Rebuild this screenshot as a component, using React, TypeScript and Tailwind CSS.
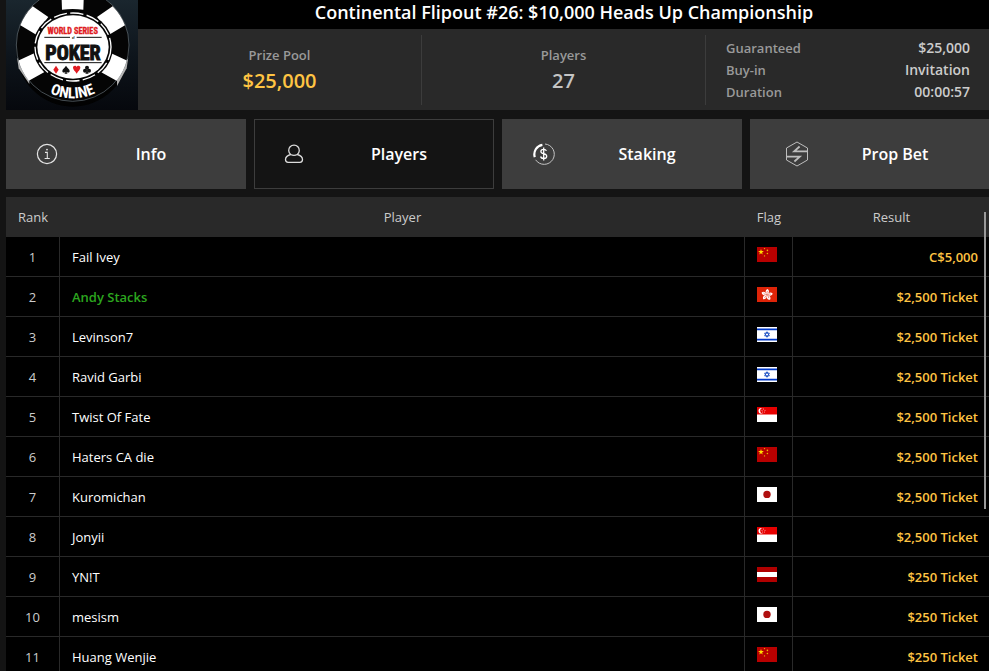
import {useState} from 'react';
import type {ReactNode} from 'react';

type FlagCode = 'cn' | 'hk' | 'il' | 'sg' | 'jp' | 'lv';

interface IPlayer {
  rank: number;
  name: string;
  flag: FlagCode;
  result: string;
  highlighted?: boolean;
}

const players: IPlayer[] = [
  {rank: 1, name: 'Fail Ivey', flag: 'cn', result: 'C$5,000'},
  {rank: 2, name: 'Andy Stacks', flag: 'hk', result: '$2,500 Ticket', highlighted: true},
  {rank: 3, name: 'Levinson7', flag: 'il', result: '$2,500 Ticket'},
  {rank: 4, name: 'Ravid Garbi', flag: 'il', result: '$2,500 Ticket'},
  {rank: 5, name: 'Twist Of Fate', flag: 'sg', result: '$2,500 Ticket'},
  {rank: 6, name: 'Haters CA die', flag: 'cn', result: '$2,500 Ticket'},
  {rank: 7, name: 'Kuromichan', flag: 'jp', result: '$2,500 Ticket'},
  {rank: 8, name: 'Jonyii', flag: 'sg', result: '$2,500 Ticket'},
  {rank: 9, name: 'YN!T', flag: 'lv', result: '$250 Ticket'},
  {rank: 10, name: 'mesism', flag: 'jp', result: '$250 Ticket'},
  {rank: 11, name: 'Huang Wenjie', flag: 'cn', result: '$250 Ticket'},
];

const details = [
  {label: 'Guaranteed', value: '$25,000'},
  {label: 'Buy-in', value: 'Invitation'},
  {label: 'Duration', value: '00:00:57'},
];

const STAR = 'M0-3 .7-.95 2.9-.9 1.1.4 1.75 2.4 0 1.2-1.75 2.4-1.1.4-2.9-.9-.7-.95Z';

const flagArt: Record<FlagCode, ReactNode> = {
  cn: (
    <>
      <rect width="20" height="15" fill="#b80000" />
      <path d={STAR} transform="translate(4 5)" fill="#ffde00" />
      <g fill="#e8b800">
        <circle cx="7.5" cy="1.6" r=".7" />
        <circle cx="10.4" cy="3.4" r=".8" />
        <circle cx="10.4" cy="6.5" r=".8" />
        <circle cx="7.5" cy="8.9" r=".7" />
      </g>
    </>
  ),
  hk: (
    <>
      <rect width="20" height="15" fill="#de2408" />
      {[0, 72, 144, 216, 288].map((deg) => (
        <g key={deg} transform={`translate(10 7.8) rotate(${deg + 8})`}>
          <path d="M0-.4C-2.4-1.8-2.4-4.6-.3-5.8 1.7-5 2.3-2.6 0-.4Z" fill="#fff" />
          <path d="M0-1.2Q-.8-2.6 0-3.8" fill="none" stroke="#de2408" strokeWidth=".5" />
        </g>
      ))}
    </>
  ),
  il: (
    <>
      <rect width="20" height="15" fill="#fff" />
      <path d="M0 2.4h20M0 12.6h20" stroke="#0038c8" strokeWidth="1.8" />
      <path
        d="M10 4.7 12.4 8.9H7.6ZM10 10.3 7.6 6.1H12.4Z"
        fill="none"
        stroke="#1b4fc4"
        strokeWidth=".9"
      />
    </>
  ),
  sg: (
    <>
      <rect width="20" height="15" fill="#fff" />
      <rect width="20" height="7.5" fill="#e60000" />
      <circle cx="4.4" cy="3.8" r="2.9" fill="#fff" />
      <circle cx="6" cy="3.8" r="2.8" fill="#e60000" />
      <g fill="#ffc4c4">
        <circle cx="6.5" cy="2" r=".5" />
        <circle cx="5" cy="3.3" r=".5" />
        <circle cx="8" cy="3.3" r=".5" />
        <circle cx="5.6" cy="5" r=".5" />
        <circle cx="7.4" cy="5" r=".5" />
      </g>
    </>
  ),
  jp: (
    <>
      <rect width="20" height="15" fill="#fff" />
      <circle cx="10" cy="7.4" r="3.7" fill="#b01010" />
    </>
  ),
  lv: (
    <>
      <rect width="20" height="15" fill="#b00000" />
      <rect y="5" width="20" height="5" fill="#fff" />
    </>
  ),
};

const flagNames: Record<FlagCode, string> = {
  cn: 'China',
  hk: 'Hong Kong',
  il: 'Israel',
  sg: 'Singapore',
  jp: 'Japan',
  lv: 'Latvia',
};

const Flag = ({code}: {code: FlagCode}) => (
  <svg
    viewBox="0 0 20 15"
    className="mb-1 block h-[15px] w-5"
    role="img"
    aria-label={flagNames[code]}
  >
    {flagArt[code]}
  </svg>
);

const tabs = [
  {
    id: 'info',
    label: 'Info',
    icon: (
      <svg viewBox="0 0 22 22" className="h-[22px] w-[22px]" fill="none" stroke="#e4e4e4">
        <circle cx="11" cy="11" r="9.6" strokeWidth="1.2" />
        <path d="M9 9.4h2.3v6M8.6 15.5h5.2" strokeWidth="1.1" />
        <circle cx="11" cy="6.6" r=".9" fill="#e4e4e4" stroke="none" />
      </svg>
    ),
  },
  {
    id: 'players',
    label: 'Players',
    icon: (
      <svg viewBox="1 0 22 22" className="h-[22px] w-[22px]" fill="none" stroke="#dcdcdc" strokeWidth="1.3">
        <path d="M7.7 11.5A5.3 5.3 0 1 1 14.3 11.5C17 12.2 19.5 14 19.5 16.6 19.5 18.4 18.6 19.4 17 19.4H5C3.4 19.4 2.5 18.4 2.5 16.6 2.5 14 5 12.2 7.7 11.5Q11 13.2 14.3 11.5" />
      </svg>
    ),
  },
  {
    id: 'staking',
    label: 'Staking',
    icon: (
      <svg viewBox="0 0 22 22" className="ml-[2px] h-[22px] w-[22px]" fill="none" stroke="#fff">
        <path d="M1.8 14.2A9.6 9.6 0 0 1 9.4 1.8" strokeWidth="2.2" />
        <path d="M12 1A10.2 10.2 0 1 1 2.6 16.8" stroke="#c4c4c4" strokeWidth="1" />
        <path
          d="M13.4 7.9C13 6.8 12 6.3 10.6 6.3 9 6.3 7.9 7.1 7.9 8.4 7.9 11.4 13.7 10 13.7 13.2 13.7 14.7 12.4 15.5 10.8 15.5 9 15.5 7.9 14.8 7.6 13.5M10.7 4.4V17.4"
          strokeWidth="1.3"
        />
      </svg>
    ),
  },
  {
    id: 'prop-bet',
    label: 'Prop Bet',
    icon: (
      <svg viewBox="0 0 24 26" className="ml-3 h-[26px] w-6" fill="none" stroke="#bdbdbd">
        <path d="M12 1 22.5 7V19L12 25 1.5 19V7Z" strokeWidth="1" />
        <path d="M14.6 5.5 9.2 10.4H22.5M9.4 20.5 14.8 15.6H1.5" strokeWidth="1.8" />
      </svg>
    ),
  },
];

const TournamentLogo = () => (
  <svg
    viewBox="0 0 396 330"
    className="h-[110px] w-[132px] shrink-0"
    role="img"
    aria-label="World Series of Poker Online"
  >
    <defs>
      <linearGradient id="backdrop" x1="0" y1="0" x2="0" y2="1">
        <stop offset="0" stopColor="#1a262e" />
        <stop offset=".5" stopColor="#0e151c" />
        <stop offset="1" stopColor="#06080d" />
      </linearGradient>
      <path id="online-arc" d="M43 138A157 157 0 0 0 357 138" />
    </defs>
    <rect width="396" height="330" fill="url(#backdrop)" />
    <ellipse cx="200" cy="150" rx="169" ry="170" fill="#020202" />
    <path d="M33 172 38 205 70 252V236Z" fill="#b5b5b5" />
    <path d="M367 172 362 205 333 258V236Z" fill="#b5b5b5" />
    <circle cx="200" cy="135" r="169" fill="#050505" stroke="#66737a" strokeWidth="2" />
    {[0, 57, -57, 117, -117].map((deg) => (
      <path
        key={deg}
        d="M-34-165Q0-172 34-165L32-108Q0-112-32-108Z"
        transform={`translate(200 137) rotate(${deg})`}
        fill="#fff"
      />
    ))}
    <ellipse cx="201" cy="141" rx="120" ry="109" fill="#050505" />
    <ellipse
      cx="201"
      cy="141"
      rx="114"
      ry="102"
      fill="none"
      stroke="#fff"
      strokeWidth="4"
      strokeDasharray="40 10"
    />
    <ellipse cx="201" cy="141" rx="107" ry="95" fill="#fff" />
    <g fontFamily="'Roboto Condensed', 'Liberation Sans Narrow', 'Open Sans Condensed', 'Liberation Sans', sans-serif" fontWeight="700" textAnchor="middle">
      <text x="200" y="101" fontSize="25" fill="#e01b22" stroke="#e01b22" strokeWidth="1">
        WORLD SERIES
      </text>
      <text x="202" y="117" fontSize="9" fill="#111">
        of
      </text>
      <text x="201" y="180" fontSize="60" fill="#111" stroke="#111" strokeWidth="3">
        POKER
      </text>
      <text fontSize="46" fill="#fff">
        <textPath href="#online-arc" startOffset="50%">
          ONLINE
        </textPath>
      </text>
    </g>
    <path d="M115 112H192M212 112H287M115 188H287" stroke="#111" strokeWidth="3" />
    <path d="M150 197 158 209 150 221 142 209Z" fill="#e01b22" />
    <path
      d="M180 197C185 205 191 207 191 213 191 219 184 219 182 215Q182 219 185 221H175Q178 219 178 215C176 219 169 219 169 213 169 207 175 205 180 197Z"
      fill="#111"
    />
    <path
      d="M212 221C207 212 201 209 201 203 201 196 210 195 212 201 214 195 223 196 223 203 223 209 217 212 212 221Z"
      fill="#e01b22"
    />
    <g fill="#111">
      <circle cx="243" cy="203" r="6" />
      <circle cx="237" cy="212" r="6" />
      <circle cx="249" cy="212" r="6" />
      <path d="M242 206H244Q244 218 248 221H238Q242 218 242 206Z" />
    </g>
  </svg>
);

const Header = () => (
  <header className="flex">
    <TournamentLogo />
    <div className="flex min-w-0 flex-1 flex-col">
      <h1 className="h-[29px] bg-black text-center text-lg leading-6 font-semibold text-white">
        Continental Flipout #26: $10,000 Heads Up Championship
      </h1>
      <div className="grid flex-1 grid-cols-3 items-center bg-[#292929] font-semibold">
        <div className="flex h-[70px] flex-col items-center justify-center border-r border-[#3c3c3c]">
          <span className="text-[13px] leading-[22px] text-[#999]">Prize Pool</span>
          <span className="text-xl leading-[30px] text-[#ffc443]">$25,000</span>
        </div>
        <div className="flex h-[70px] flex-col items-center justify-center border-r border-[#3c3c3c]">
          <span className="text-[13px] leading-[22px] text-[#999]">Players</span>
          <span className="text-xl leading-[30px] text-[#c4c4c4]">27</span>
        </div>
        <dl className="px-5">
          {details.map(({label, value}) => (
            <div key={label} className="flex items-center justify-between leading-[22px]">
              <dt className="text-[13px] text-[#999]">{label}</dt>
              <dd className="text-sm leading-[22px] text-[#ccc]">{value}</dd>
            </div>
          ))}
        </dl>
      </div>
    </div>
  </header>
);

const App = () => {
  const [activeTab, setActiveTab] = useState('players');

  return (
    <div className="h-screen overflow-hidden bg-[#141414] pl-[6px] font-['Open_Sans','Noto_Sans',sans-serif]">
      <div className="-mr-px flex h-full flex-col">
        <Header />

        <nav className="mt-[9px] grid grid-cols-4 gap-2">
          {tabs.map(({id, label, icon}) => (
            <button
              key={id}
              type="button"
              onClick={() => setActiveTab(id)}
              className={`flex h-[70px] cursor-pointer items-center border border-[#3d3d3d] pr-[30px] font-semibold text-white ${
                activeTab === id ? 'bg-[#141414]' : 'bg-[#3d3d3d]'
              }`}
            >
              <span className="flex w-20 shrink-0 justify-center">{icon}</span>
              <span className="flex-1 text-base">{label}</span>
            </button>
          ))}
        </nav>

        <div className="relative mt-2 min-h-0 flex-1 overflow-hidden">
          <table className="w-full table-fixed border-separate border-spacing-0 text-[13px]">
            <colgroup>
              <col className="w-[54px]" />
              <col />
              <col className="w-12" />
              <col className="w-[197px]" />
            </colgroup>
            <thead>
              <tr className="h-10 bg-[#292929] text-[#ccc]">
                <th className="p-0 pt-0.5 text-center font-normal">Rank</th>
                <th className="p-0 pt-0.5 text-center font-normal">Player</th>
                <th className="p-0 pt-0.5 text-center font-normal">Flag</th>
                <th className="p-0 pt-0.5 text-center font-normal">Result</th>
              </tr>
            </thead>
            <tbody>
              {players.map(({rank, name, flag, result, highlighted}) => (
                <tr key={rank} className="h-10 bg-black">
                  <td className="border-r border-b border-[#292929] p-0 pt-0.5 text-center text-[#ccc]">
                    {rank}
                  </td>
                  <td
                    className={`border-r border-b border-[#292929] px-3 pt-0.5 pb-0 ${
                      highlighted ? 'font-semibold text-[#2ca51f]' : 'text-white'
                    }`}
                  >
                    {name}
                  </td>
                  <td className="border-r border-b border-[#292929] px-3 py-0">
                    <Flag code={flag} />
                  </td>
                  <td className="border-b border-[#292929] px-3 pt-0.5 pb-0 text-right font-semibold text-[#ffc443]">
                    {result}
                  </td>
                </tr>
              ))}
            </tbody>
          </table>
          {/* scroll thumb */}
          <div className="absolute top-[15px] right-1 h-[297px] w-[2px] bg-[#999]" />
        </div>
      </div>
    </div>
  );
};

export default App;
